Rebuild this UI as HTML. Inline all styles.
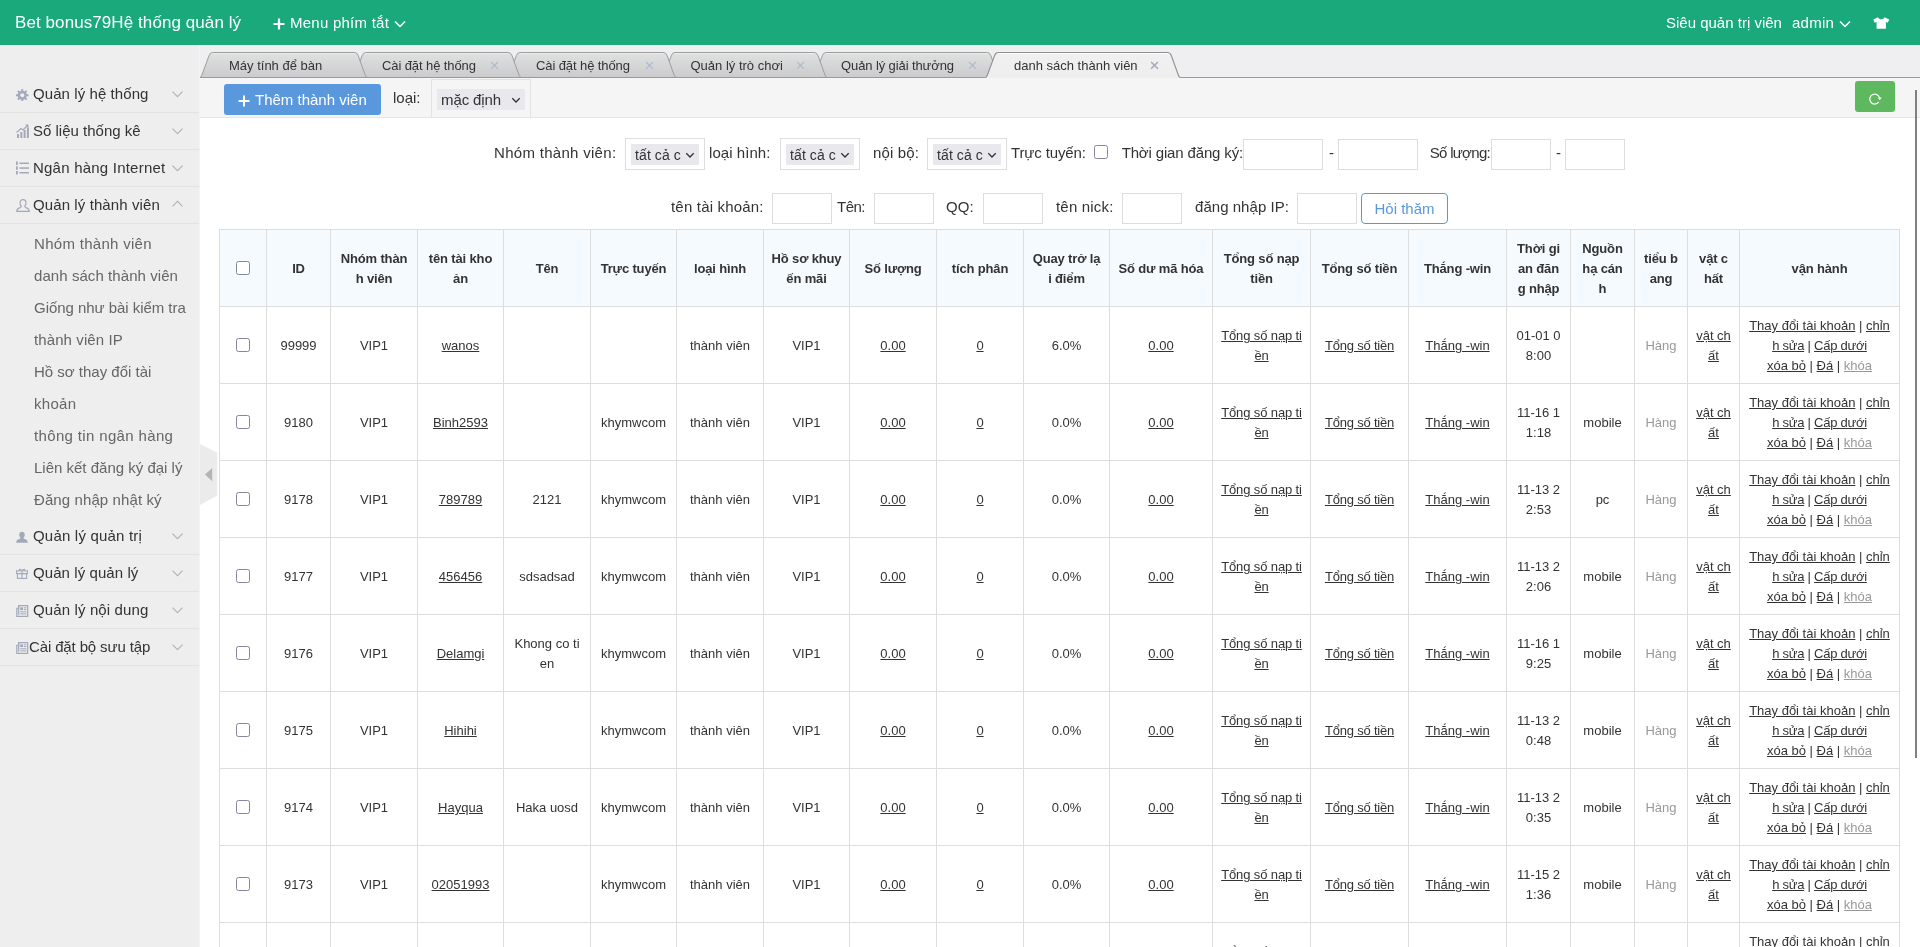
<!DOCTYPE html>
<html lang="vi">
<head>
<meta charset="utf-8">
<title>Bet bonus79Hệ thống quản lý</title>
<style>
*{box-sizing:border-box;margin:0;padding:0}
html,body{width:1920px;height:947px;overflow:hidden;background:#fff}
body{font-family:"Liberation Sans",sans-serif;font-size:15px;color:#333;position:relative;will-change:transform}
a{color:#333;text-decoration:underline}
svg{display:block}
/* header */
#hd{position:absolute;left:0;top:0;width:1920px;height:45px;background:#19a97b;color:#fff}
#hd div{position:absolute;top:0;line-height:46px;letter-spacing:.25px;font-size:15px;white-space:nowrap}
#hd .logo{left:15px;line-height:46px;font-size:17px;letter-spacing:.08px}
#hd svg{position:absolute}
/* aside */
#aside{position:absolute;left:0;top:45px;width:200px;height:902px;background:#eee;border-right:1px solid #f3f3f3}
#aside .dt{position:absolute;left:0;width:199px;height:37px;border-bottom:1px solid #e3e3e3;line-height:36px;font-size:15px;color:#333;white-space:nowrap}
#aside .dt span{position:absolute;left:33px;top:0}
#aside .dt svg{position:absolute}
#aside .li{position:absolute;left:34px;height:32px;line-height:32px;font-size:15px;color:#666;white-space:nowrap}
#arrow{position:absolute;left:200px;top:444px}
/* tabs */
#tabbar{position:absolute;left:200px;top:45px;width:1720px;height:33px;background:#efeff1}
#tabbar svg{position:absolute;left:0;top:0}
#tabbar .t{position:absolute;top:11px;line-height:20px;font-size:13px;color:#333;white-space:nowrap}
/* toolbar */
#tool{position:absolute;left:200px;top:78px;width:1720px;height:40px;background:#f5f5f5;border-bottom:1px solid #e5e5e5}
#addbtn{position:absolute;left:24px;top:6px;width:157px;height:31px;border-radius:3px;background:#5a98de;color:#fff;font-size:15px;line-height:31px;white-space:nowrap}
#addbtn span{position:absolute;left:31px;top:0}
#tool .lb{position:absolute;left:193px;top:6px;line-height:28px;font-size:15px}
.selbox{position:absolute;background:#fff;border:1px solid #ddd;height:32px;width:80px}
.sel{position:absolute;left:5px;top:5px;width:68px;height:21px;background:#e9e9ed;border-radius:0;font-size:14px;line-height:22px;padding-left:4px;white-space:nowrap;overflow:hidden;color:#333}
.sel i{display:block;font-style:normal;width:46px;overflow:hidden;letter-spacing:.1px}
.sel svg{position:absolute;right:4px;top:8px}
#refresh{position:absolute;left:1655px;top:3px;width:40px;height:31px;border-radius:3px;background:#5eb95e}
/* filter */
#flt .lb{position:absolute;line-height:31px;font-size:15px;white-space:nowrap;color:#333}
#flt .inp{position:absolute;height:31px;border:1px solid #ddd;background:#fff}
#flt .cb,.cb{position:absolute;width:14px;height:14px;border:1px solid #85859f;border-radius:2.500px;background:#fff}
#qbtn{position:absolute;left:1361px;top:193px;width:87px;height:31px;border:1px solid #5a98de;border-radius:4px;color:#5a98de;font-size:15px;line-height:29px;text-align:center;background:#fff}
/* table */
#tb{position:absolute;left:219px;top:229px;border-collapse:collapse;table-layout:fixed;font-size:13px;line-height:20px;color:#333}
#tb th,#tb td{border:1px solid #ddd;padding:9px 0 7px;text-align:center;vertical-align:middle;white-space:nowrap;overflow:hidden;height:77px}
#tb th{background:#f5fafe;font-weight:bold;letter-spacing:-.15px}
#tb td{background:#fff}
#tb .g{color:#999}
#tb .n1{letter-spacing:-.12px}
#tb .n2{letter-spacing:-.2px}
#tb .n3{letter-spacing:-.25px}
#tb a.g{color:#999}
#tb td.c,#tb th.c{position:relative}
#tb .cb{left:16px;top:31px}
#sb{position:absolute;left:1915px;top:90px;width:2px;height:668px;background:#808080}
</style>
</head>
<body>
<div id="hd">
<div class="logo">Bet bonus79Hệ thống quản lý</div>
<svg style="left:273px;top:18px" width="12" height="12" viewBox="0 0 12 12"><path d="M6 0.500v11M0.500 6h11" stroke="#fff" stroke-width="2.200" fill="none"/></svg>
<div style="left:290px">Menu phím tắt</div>
<svg style="left:394px;top:20px" width="12" height="8" viewBox="0 0 12 8"><path d="M1 1.500l5 5 5-5" stroke="#fff" stroke-width="1.500" fill="none"/></svg>
<div style="left:1666px;letter-spacing:0">Siêu quản trị viên</div>
<div style="left:1792px">admin</div>
<svg style="left:1839px;top:20px" width="12" height="8" viewBox="0 0 12 8"><path d="M1 1.500l5 5 5-5" stroke="#fff" stroke-width="1.500" fill="none"/></svg>
<svg style="left:1873px;top:17px" width="16.500" height="12" viewBox="0 0 18 13"><path d="M5.500 0.300L0.300 2.600l1.600 3.600 2-0.700v7.200h10.200V5.500l2 0.700 1.600-3.600L12.500 0.300c-0.600 1.600-1.900 2.200-3.500 2.200S6.100 1.900 5.500 0.300z" fill="#fff"/></svg>
</div>
<div id="aside">
<div class="dt" style="top:31px"><svg style="left:16px;top:12.500px" width="12.500" height="12.500" viewBox="0 0 13 13"><circle cx="6.500" cy="6.500" r="3.700" fill="none" stroke="#a3a9b9" stroke-width="2.200"/><g stroke="#a3a9b9" stroke-width="1.900"><path d="M6.500 0v13M0 6.500h13M1.900 1.900l9.200 9.200M11.100 1.900l-9.200 9.200"/></g><circle cx="6.500" cy="6.500" r="2.100" fill="#eee"/></svg><span style="left:33px;letter-spacing:0.08px">Quản lý hệ thống</span><svg style="left:172px;top:15px" width="11" height="7" viewBox="0 0 11 7"><path d="M0.500 0.700l5 5 5-5" stroke="#b2b2b2" stroke-width="1.100" fill="none"/></svg></div>
<div class="dt" style="top:68px"><svg style="left:16px;top:11px" width="13" height="14" viewBox="0 0 13 14"><g fill="#a3a9b9"><rect x="1" y="10" width="2" height="4"/><rect x="4.300" y="8" width="2" height="6"/><rect x="7.600" y="6" width="2" height="8"/><rect x="10.900" y="3.500" width="2" height="10.500"/></g><path d="M0.500 8.500L5 4.500l2 1.500 4.500-4.500" stroke="#a3a9b9" stroke-width="1.200" fill="none"/><path d="M9 0.500h3.500v3.500z" fill="#a3a9b9"/></svg><span style="left:33px">Số liệu thống kê</span><svg style="left:172px;top:15px" width="11" height="7" viewBox="0 0 11 7"><path d="M0.500 0.700l5 5 5-5" stroke="#b2b2b2" stroke-width="1.100" fill="none"/></svg></div>
<div class="dt" style="top:105px"><svg style="left:16px;top:11px" width="13" height="14" viewBox="0 0 13 14"><g fill="#a3a9b9"><rect x="3.500" y="1.500" width="9.500" height="1.500"/><rect x="3.500" y="6.300" width="9.500" height="1.500"/><rect x="3.500" y="11" width="9.500" height="1.500"/><rect x="0" y="0.500" width="1.800" height="3.500"/><rect x="0" y="5.300" width="1.800" height="3.500"/><rect x="0" y="10" width="1.800" height="3.500"/></g></svg><span style="left:33px;letter-spacing:0.22px">Ngân hàng Internet</span><svg style="left:172px;top:15px" width="11" height="7" viewBox="0 0 11 7"><path d="M0.500 0.700l5 5 5-5" stroke="#b2b2b2" stroke-width="1.100" fill="none"/></svg></div>
<div class="dt" style="top:142px"><svg style="left:16px;top:12px" width="14" height="13" viewBox="0 0 14 13"><path d="M7 0.700c-1.900 0-3 1.400-3 3.200 0 1.300 0.500 2.400 1.300 3 0 0.800-0.300 1.300-1.300 1.700-1.700 0.600-3.300 1.200-3.300 3.700h12.600c0-2.500-1.600-3.100-3.300-3.700-1-0.400-1.300-0.900-1.300-1.700 0.800-0.600 1.300-1.700 1.300-3 0-1.800-1.100-3.200-3-3.200z" fill="none" stroke="#a3a9b9" stroke-width="1.200"/></svg><span style="left:33px;letter-spacing:0.10px">Quản lý thành viên</span><svg style="left:172px;top:13px" width="11" height="7" viewBox="0 0 11 7"><path d="M0.500 6.300l5-5 5 5" stroke="#b2b2b2" stroke-width="1.100" fill="none"/></svg></div>
<div class="dt" style="top:473px"><svg style="left:16px;top:13px" width="12" height="12.500" viewBox="0 0 13 13"><path d="M6.500 0.500c-1.900 0-3 1.400-3 3.200 0 1.300 0.500 2.400 1.300 3 0 0.800-0.300 1.300-1.300 1.700-1.700 0.600-3.300 1.200-3.300 4.100h12.600c0-2.900-1.600-3.500-3.300-4.100-1-0.400-1.300-0.900-1.300-1.700 0.800-0.600 1.300-1.700 1.300-3 0-1.800-1.100-3.200-3-3.200z" fill="#a3a9b9"/></svg><span style="left:33px;letter-spacing:0.20px">Quản lý quản trị</span><svg style="left:172px;top:15px" width="11" height="7" viewBox="0 0 11 7"><path d="M0.500 0.700l5 5 5-5" stroke="#b2b2b2" stroke-width="1.100" fill="none"/></svg></div>
<div class="dt" style="top:510px"><svg style="left:16px;top:13px" width="12" height="11" viewBox="0 0 12 11"><g fill="none" stroke="#a3a9b9" stroke-width="1.100"><rect x="0.600" y="2.800" width="10.800" height="2.800"/><rect x="1.400" y="5.600" width="9.200" height="4.800"/><path d="M6 2.800v7.600M6 2.800C4.500 0.500 2.500 1 3.500 2.800M6 2.800C7.500 0.500 9.500 1 8.500 2.800"/></g></svg><span style="left:33px;letter-spacing:0.08px">Quản lý quản lý</span><svg style="left:172px;top:15px" width="11" height="7" viewBox="0 0 11 7"><path d="M0.500 0.700l5 5 5-5" stroke="#b2b2b2" stroke-width="1.100" fill="none"/></svg></div>
<div class="dt" style="top:547px"><svg style="left:16px;top:13px" width="12.500" height="12" viewBox="0 0 13 13"><g fill="none" stroke="#a3a9b9" stroke-width="1.300"><path d="M2.600 0.600h9.800v11.800H0.600V3.500h2z"/><path d="M2.600 0.600v10"/></g><g fill="#a3a9b9"><rect x="4.300" y="2.500" width="3" height="3"/><rect x="8.200" y="2.500" width="2.800" height="1.100"/><rect x="8.200" y="4.400" width="2.800" height="1.100"/><rect x="4.300" y="6.800" width="6.700" height="1.100"/><rect x="4.300" y="9" width="6.700" height="1.100"/></g></svg><span style="left:33px;letter-spacing:0.13px">Quản lý nội dung</span><svg style="left:172px;top:15px" width="11" height="7" viewBox="0 0 11 7"><path d="M0.500 0.700l5 5 5-5" stroke="#b2b2b2" stroke-width="1.100" fill="none"/></svg></div>
<div class="dt" style="top:584px"><svg style="left:16px;top:13px" width="12.500" height="12" viewBox="0 0 13 13"><g fill="none" stroke="#a3a9b9" stroke-width="1.300"><path d="M2.600 0.600h9.800v11.800H0.600V3.500h2z"/><path d="M2.600 0.600v10"/></g><g fill="#a3a9b9"><rect x="4.300" y="2.500" width="3" height="3"/><rect x="8.200" y="2.500" width="2.800" height="1.100"/><rect x="8.200" y="4.400" width="2.800" height="1.100"/><rect x="4.300" y="6.800" width="6.700" height="1.100"/><rect x="4.300" y="9" width="6.700" height="1.100"/></g></svg><span style="left:29px;letter-spacing:-0.13px">Cài đặt bộ sưu tập</span><svg style="left:172px;top:15px" width="11" height="7" viewBox="0 0 11 7"><path d="M0.500 0.700l5 5 5-5" stroke="#b2b2b2" stroke-width="1.100" fill="none"/></svg></div>
<div class="li" style="top:183px;letter-spacing:0.30px">Nhóm thành viên</div>
<div class="li" style="top:215px;letter-spacing:0.07px">danh sách thành viên</div>
<div class="li" style="top:247px;letter-spacing:-0.04px">Giống như bài kiểm tra</div>
<div class="li" style="top:279px;letter-spacing:0.10px">thành viên IP</div>
<div class="li" style="top:311px">Hồ sơ thay đổi tài</div>
<div class="li" style="top:343px;letter-spacing:0.30px">khoản</div>
<div class="li" style="top:375px;letter-spacing:0.35px">thông tin ngân hàng</div>
<div class="li" style="top:407px">Liên kết đăng ký đại lý</div>
<div class="li" style="top:439px;letter-spacing:0.10px">Đăng nhập nhật ký</div>
</div>
<svg id="arrow" width="18" height="62" viewBox="0 0 18 62"><path d="M0 0L17.200 8.800V51.400L0 61z" fill="#ebebeb"/><path d="M12.200 24v13.200L5 30.600z" fill="#b4b4b4"/></svg>
<div id="tabbar">
<svg width="1720" height="33" viewBox="0 0 1720 33"><defs><linearGradient id="tg" gradientUnits="userSpaceOnUse" x1="0" y1="7.500" x2="0" y2="32.500"><stop offset="0" stop-color="#ececec"/><stop offset="0.070" stop-color="#ececec"/><stop offset="0.080" stop-color="#dedfdf"/><stop offset="1" stop-color="#cbcbcd"/></linearGradient><linearGradient id="ta" gradientUnits="userSpaceOnUse" x1="0" y1="7.500" x2="0" y2="32.500"><stop offset="0" stop-color="#fff"/><stop offset="0.070" stop-color="#fff"/><stop offset="0.080" stop-color="#f0f0f0"/><stop offset="1" stop-color="#eee"/></linearGradient></defs><path d="M613.2 32.5Q614.3 32.5 614.9 30.7L622.4 10.5Q623.4 7.5 626.1 7.5H786.7Q789.6 7.5 790.7 10.3L797.9 30.3Q798.7 32.5 800.3 32.5" fill="url(#tg)" stroke="#9d9d9d" stroke-width="1"/><path d="M462.1 32.5Q463.2 32.5 463.8 30.7L471.3 10.5Q472.3 7.5 475.0 7.5H613.9Q616.8 7.5 617.9 10.3L625.1 30.3Q625.9 32.5 627.5 32.5" fill="url(#tg)" stroke="#9d9d9d" stroke-width="1"/><path d="M307.2 32.5Q308.3 32.5 308.9 30.7L316.4 10.5Q317.4 7.5 320.1 7.5H463.0Q465.9 7.5 467.0 10.3L474.2 30.3Q475.0 32.5 476.6 32.5" fill="url(#tg)" stroke="#9d9d9d" stroke-width="1"/><path d="M153.0 32.5Q154.1 32.5 154.7 30.7L162.2 10.5Q163.2 7.5 165.9 7.5H307.9Q310.8 7.5 311.9 10.3L319.1 30.3Q319.9 32.5 321.5 32.5" fill="url(#tg)" stroke="#9d9d9d" stroke-width="1"/><path d="M-0.1 32.5Q1.0 32.5 1.6 30.7L9.1 10.5Q10.1 7.5 12.8 7.5H154.1Q157.0 7.5 158.1 10.3L165.3 30.3Q166.1 32.5 167.7 32.5" fill="url(#tg)" stroke="#9d9d9d" stroke-width="1"/><rect x="0" y="32" width="1720" height="1" fill="#9a9a9a"/><path d="M785.4 32.5Q786.5 32.5 787.1 30.7L794.6 10.5Q795.6 7.5 798.3 7.5H967.2Q970.1 7.5 971.2 10.3L978.4 30.3Q979.2 32.5 980.8 32.5V34H785.7z" fill="url(#ta)" stroke="none"/><path d="M785.4 32.5Q786.5 32.5 787.1 30.7L794.6 10.5Q795.6 7.5 798.3 7.5H967.2Q970.1 7.5 971.2 10.3L978.4 30.3Q979.2 32.5 980.8 32.5" fill="none" stroke="#919191" stroke-width="1.100"/><path d="M291.1 17.0l6.800 6.800M297.9 17.0l-6.800 6.800" stroke="#b0b9cb" stroke-width="1.100" fill="none"/><path d="M446.1 17.0l6.800 6.800M452.9 17.0l-6.800 6.800" stroke="#b0b9cb" stroke-width="1.100" fill="none"/><path d="M597.1 17.0l6.800 6.800M603.9 17.0l-6.800 6.800" stroke="#b0b9cb" stroke-width="1.100" fill="none"/><path d="M769.1 17.0l6.800 6.800M775.9 17.0l-6.800 6.800" stroke="#b0b9cb" stroke-width="1.100" fill="none"/><path d="M951.1 17.0l6.800 6.800M957.9 17.0l-6.800 6.800" stroke="#a3a9b9" stroke-width="1.500" fill="none"/></svg>
<div class="t" style="left:29.0px">Máy tính để bàn</div>
<div class="t" style="left:182.0px;letter-spacing:-.1px">Cài đặt hệ thống</div>
<div class="t" style="left:336.0px;letter-spacing:-.1px">Cài đặt hệ thống</div>
<div class="t" style="left:490.5px">Quản lý trò chơi</div>
<div class="t" style="left:641.0px;letter-spacing:-.1px">Quản lý giải thưởng</div>
<div class="t" style="left:814.0px">danh sách thành viên</div>
</div>
<div id="tool">
<div id="addbtn"><svg style="position:absolute;left:14px;top:11px" width="12" height="12" viewBox="0 0 12 12"><path d="M6 0.500v11M0.500 6h11" stroke="#fff" stroke-width="2" fill="none"/></svg><span>Thêm thành viên</span></div>
<div class="lb">loại:</div>
<div class="selbox" style="left:231px;top:1px;width:100px;height:39px;border-bottom:0;border-color:#e3e3e3;background:none"><div class="sel" style="top:9px;width:88px;font-size:15px;line-height:21px"><i style="width:70px;letter-spacing:-.1px">mặc định</i><svg width="10" height="7" viewBox="0 0 10 7"><path d="M1.300 1.200l3.700 3.800 3.700-3.800" stroke="#333" stroke-width="1.300" fill="none"/></svg></div></div>
<div id="refresh"><svg style="position:absolute;left:13px;top:11px" width="14" height="14" viewBox="0 0 14 14"><path d="M11.700 6.300A5 5 0 1 0 10.700 10.200" stroke="#fff" stroke-width="1.200" fill="none"/><path d="M9.800 5.600h3.800l-1.900 2.600z" fill="#fff"/></svg></div>
</div>
<div id="flt">
<div class="lb" style="left:494px;top:137px;letter-spacing:0.30px">Nhóm thành viên:</div>
<div class="selbox" style="left:625px;top:138px"><div class="sel"><i>tất cả các</i><svg width="10" height="7" viewBox="0 0 10 7"><path d="M1.300 1.200l3.700 3.800 3.700-3.800" stroke="#333" stroke-width="1.300" fill="none"/></svg></div></div>
<div class="lb" style="left:709px;top:137px;letter-spacing:0.05px">loại hình:</div>
<div class="selbox" style="left:780px;top:138px"><div class="sel"><i>tất cả các</i><svg width="10" height="7" viewBox="0 0 10 7"><path d="M1.300 1.200l3.700 3.800 3.700-3.800" stroke="#333" stroke-width="1.300" fill="none"/></svg></div></div>
<div class="lb" style="left:873px;top:137px;letter-spacing:0.15px">nội bộ:</div>
<div class="selbox" style="left:927px;top:138px"><div class="sel"><i>tất cả các</i><svg width="10" height="7" viewBox="0 0 10 7"><path d="M1.300 1.200l3.700 3.800 3.700-3.800" stroke="#333" stroke-width="1.300" fill="none"/></svg></div></div>
<div class="lb" style="left:1011px;top:137px;letter-spacing:-0.13px">Trực tuyến:</div>
<div class="cb" style="left:1094px;top:145px"></div>
<div class="lb" style="right:677px;top:137px;letter-spacing:-0.15px">Thời gian đăng ký:</div>
<div class="inp" style="left:1243px;top:139px;width:80px"></div>
<div class="lb" style="left:1329px;top:137px">-</div>
<div class="inp" style="left:1338px;top:139px;width:80px"></div>
<div class="lb" style="right:430px;top:137px;letter-spacing:-0.70px">Số lượng:</div>
<div class="inp" style="left:1491px;top:139px;width:60px"></div>
<div class="lb" style="left:1556px;top:137px">-</div>
<div class="inp" style="left:1565px;top:139px;width:60px"></div>
<div class="lb" style="left:671px;top:191px;letter-spacing:0.19px">tên tài khoản:</div>
<div class="inp" style="left:772px;top:193px;width:60px"></div>
<div class="lb" style="left:837px;top:191px;letter-spacing:-0.50px">Tên:</div>
<div class="inp" style="left:874px;top:193px;width:60px"></div>
<div class="lb" style="left:946px;top:191px;letter-spacing:0.10px">QQ:</div>
<div class="inp" style="left:983px;top:193px;width:60px"></div>
<div class="lb" style="left:1056px;top:191px;letter-spacing:0.19px">tên nick:</div>
<div class="inp" style="left:1122px;top:193px;width:60px"></div>
<div class="lb" style="left:1195px;top:191px;letter-spacing:0.04px">đăng nhập IP:</div>
<div class="inp" style="left:1297px;top:193px;width:60px"></div>
<div id="qbtn">Hỏi thăm</div>
</div>
<table id="tb" style="width:1681px"><colgroup><col style="width:47px"><col style="width:64px"><col style="width:87px"><col style="width:86px"><col style="width:87px"><col style="width:86px"><col style="width:87px"><col style="width:86px"><col style="width:87px"><col style="width:87px"><col style="width:86px"><col style="width:103px"><col style="width:98px"><col style="width:98px"><col style="width:98px"><col style="width:64px"><col style="width:64px"><col style="width:53px"><col style="width:52px"><col style="width:160px"></colgroup>
<thead><tr><th class="c"><div class="cb"></div></th><th>ID</th><th>Nhóm thàn<br>h viên</th><th>tên tài kho<br>ản</th><th>Tên</th><th>Trực tuyến</th><th>loại hình</th><th>Hồ sơ khuy<br>ến mãi</th><th>Số lượng</th><th>tích phân</th><th>Quay trở lạ<br>i điểm</th><th>Số dư mã hóa</th><th>Tổng số nạp<br>tiền</th><th>Tổng số tiền</th><th>Thắng -win</th><th>Thời gi<br>an đăn<br>g nhập</th><th>Nguồn<br>hạ cán<br>h</th><th>tiểu b<br>ang</th><th>vật c<br>hất</th><th>vận hành</th></tr></thead><tbody>
<tr><td class="c"><div class="cb"></div></td><td>99999</td><td>VIP1</td><td><a>wanos</a></td><td></td><td></td><td>thành viên</td><td>VIP1</td><td><a>0.00</a></td><td><a>0</a></td><td>6.0%</td><td><a>0.00</a></td><td><a class="n1">Tổng số nạp ti<br>ền</a></td><td><a class="n2">Tổng số tiền</a></td><td><a>Thắng -win</a></td><td>01-01 0<br>8:00</td><td></td><td><span class="g">Hàng</span></td><td><a>vật ch<br>ất</a></td><td><a>Thay đổi tài khoản</a> | <a>chỉn<br><span class="n3">h sửa</span></a><span class="n3"> | <a>Cấp dưới</a></span><br><a>xóa bỏ</a> | <a>Đá</a> | <a class="g">khóa</a></td></tr>
<tr><td class="c"><div class="cb"></div></td><td>9180</td><td>VIP1</td><td><a>Binh2593</a></td><td></td><td>khymwcom</td><td>thành viên</td><td>VIP1</td><td><a>0.00</a></td><td><a>0</a></td><td>0.0%</td><td><a>0.00</a></td><td><a class="n1">Tổng số nạp ti<br>ền</a></td><td><a class="n2">Tổng số tiền</a></td><td><a>Thắng -win</a></td><td>11-16 1<br>1:18</td><td>mobile</td><td><span class="g">Hàng</span></td><td><a>vật ch<br>ất</a></td><td><a>Thay đổi tài khoản</a> | <a>chỉn<br><span class="n3">h sửa</span></a><span class="n3"> | <a>Cấp dưới</a></span><br><a>xóa bỏ</a> | <a>Đá</a> | <a class="g">khóa</a></td></tr>
<tr><td class="c"><div class="cb"></div></td><td>9178</td><td>VIP1</td><td><a>789789</a></td><td>2121</td><td>khymwcom</td><td>thành viên</td><td>VIP1</td><td><a>0.00</a></td><td><a>0</a></td><td>0.0%</td><td><a>0.00</a></td><td><a class="n1">Tổng số nạp ti<br>ền</a></td><td><a class="n2">Tổng số tiền</a></td><td><a>Thắng -win</a></td><td>11-13 2<br>2:53</td><td>pc</td><td><span class="g">Hàng</span></td><td><a>vật ch<br>ất</a></td><td><a>Thay đổi tài khoản</a> | <a>chỉn<br><span class="n3">h sửa</span></a><span class="n3"> | <a>Cấp dưới</a></span><br><a>xóa bỏ</a> | <a>Đá</a> | <a class="g">khóa</a></td></tr>
<tr><td class="c"><div class="cb"></div></td><td>9177</td><td>VIP1</td><td><a>456456</a></td><td>sdsadsad</td><td>khymwcom</td><td>thành viên</td><td>VIP1</td><td><a>0.00</a></td><td><a>0</a></td><td>0.0%</td><td><a>0.00</a></td><td><a class="n1">Tổng số nạp ti<br>ền</a></td><td><a class="n2">Tổng số tiền</a></td><td><a>Thắng -win</a></td><td>11-13 2<br>2:06</td><td>mobile</td><td><span class="g">Hàng</span></td><td><a>vật ch<br>ất</a></td><td><a>Thay đổi tài khoản</a> | <a>chỉn<br><span class="n3">h sửa</span></a><span class="n3"> | <a>Cấp dưới</a></span><br><a>xóa bỏ</a> | <a>Đá</a> | <a class="g">khóa</a></td></tr>
<tr><td class="c"><div class="cb"></div></td><td>9176</td><td>VIP1</td><td><a>Delamgi</a></td><td>Khong co ti<br>en</td><td>khymwcom</td><td>thành viên</td><td>VIP1</td><td><a>0.00</a></td><td><a>0</a></td><td>0.0%</td><td><a>0.00</a></td><td><a class="n1">Tổng số nạp ti<br>ền</a></td><td><a class="n2">Tổng số tiền</a></td><td><a>Thắng -win</a></td><td>11-16 1<br>9:25</td><td>mobile</td><td><span class="g">Hàng</span></td><td><a>vật ch<br>ất</a></td><td><a>Thay đổi tài khoản</a> | <a>chỉn<br><span class="n3">h sửa</span></a><span class="n3"> | <a>Cấp dưới</a></span><br><a>xóa bỏ</a> | <a>Đá</a> | <a class="g">khóa</a></td></tr>
<tr><td class="c"><div class="cb"></div></td><td>9175</td><td>VIP1</td><td><a>Hihihi</a></td><td></td><td>khymwcom</td><td>thành viên</td><td>VIP1</td><td><a>0.00</a></td><td><a>0</a></td><td>0.0%</td><td><a>0.00</a></td><td><a class="n1">Tổng số nạp ti<br>ền</a></td><td><a class="n2">Tổng số tiền</a></td><td><a>Thắng -win</a></td><td>11-13 2<br>0:48</td><td>mobile</td><td><span class="g">Hàng</span></td><td><a>vật ch<br>ất</a></td><td><a>Thay đổi tài khoản</a> | <a>chỉn<br><span class="n3">h sửa</span></a><span class="n3"> | <a>Cấp dưới</a></span><br><a>xóa bỏ</a> | <a>Đá</a> | <a class="g">khóa</a></td></tr>
<tr><td class="c"><div class="cb"></div></td><td>9174</td><td>VIP1</td><td><a>Hayqua</a></td><td>Haka uosd</td><td>khymwcom</td><td>thành viên</td><td>VIP1</td><td><a>0.00</a></td><td><a>0</a></td><td>0.0%</td><td><a>0.00</a></td><td><a class="n1">Tổng số nạp ti<br>ền</a></td><td><a class="n2">Tổng số tiền</a></td><td><a>Thắng -win</a></td><td>11-13 2<br>0:35</td><td>mobile</td><td><span class="g">Hàng</span></td><td><a>vật ch<br>ất</a></td><td><a>Thay đổi tài khoản</a> | <a>chỉn<br><span class="n3">h sửa</span></a><span class="n3"> | <a>Cấp dưới</a></span><br><a>xóa bỏ</a> | <a>Đá</a> | <a class="g">khóa</a></td></tr>
<tr><td class="c"><div class="cb"></div></td><td>9173</td><td>VIP1</td><td><a>02051993</a></td><td></td><td>khymwcom</td><td>thành viên</td><td>VIP1</td><td><a>0.00</a></td><td><a>0</a></td><td>0.0%</td><td><a>0.00</a></td><td><a class="n1">Tổng số nạp ti<br>ền</a></td><td><a class="n2">Tổng số tiền</a></td><td><a>Thắng -win</a></td><td>11-15 2<br>1:36</td><td>mobile</td><td><span class="g">Hàng</span></td><td><a>vật ch<br>ất</a></td><td><a>Thay đổi tài khoản</a> | <a>chỉn<br><span class="n3">h sửa</span></a><span class="n3"> | <a>Cấp dưới</a></span><br><a>xóa bỏ</a> | <a>Đá</a> | <a class="g">khóa</a></td></tr>
<tr><td class="c"><div class="cb"></div></td><td></td><td>VIP1</td><td></td><td></td><td></td><td>thành viên</td><td>VIP1</td><td><a>0.00</a></td><td><a>0</a></td><td></td><td><a>0.00</a></td><td><a class="n1">Tổng số nạp ti<br>ền</a></td><td><a class="n2">Tổng số tiền</a></td><td><a>Thắng -win</a></td><td></td><td></td><td><span class="g">Hàng</span></td><td><a>vật ch<br>ất</a></td><td><a>Thay đổi tài khoản</a> | <a>chỉn<br><span class="n3">h sửa</span></a><span class="n3"> | <a>Cấp dưới</a></span><br><a>xóa bỏ</a> | <a>Đá</a> | <a class="g">khóa</a></td></tr>
</tbody></table>
<div id="sb"></div>
</body>
</html>
